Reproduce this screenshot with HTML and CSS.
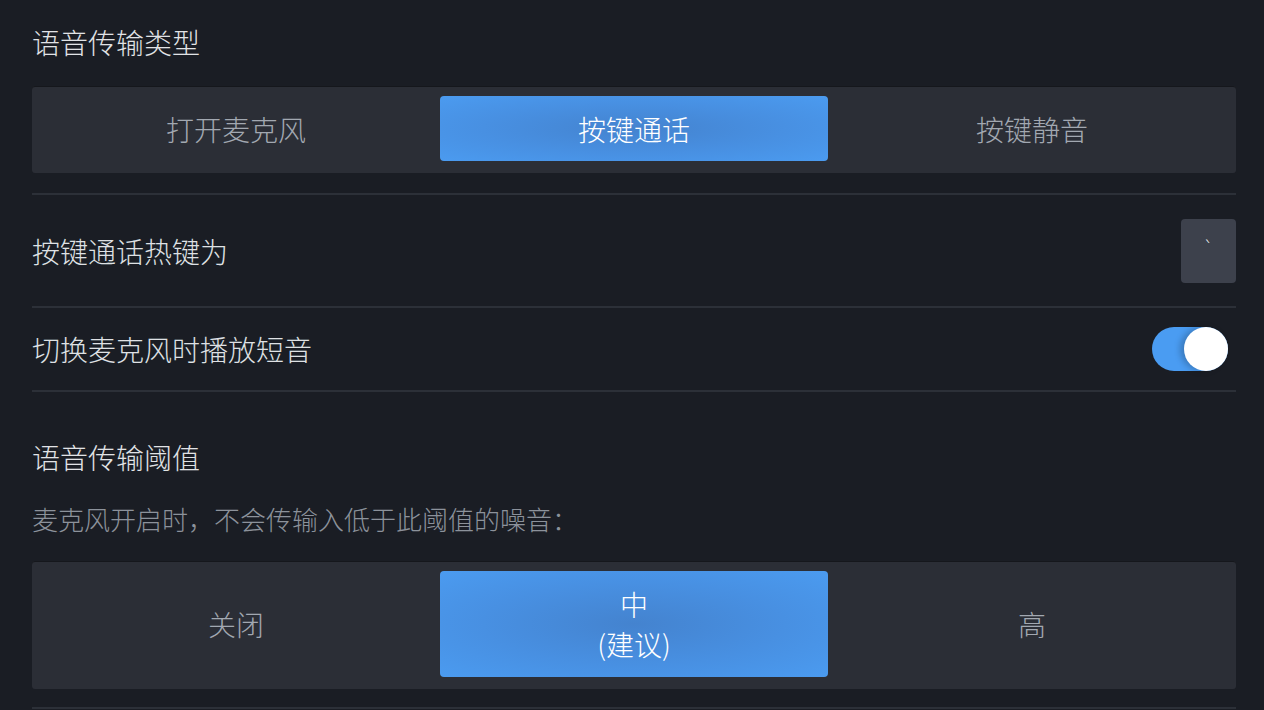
FILE: index.html
```html
<!DOCTYPE html>
<html lang="zh-CN">
<head>
<meta charset="utf-8">
<link rel="stylesheet" href="styles.css">
</head>
<body>
<div class="page">
  <div class="section-title first">语音传输类型</div>
  <div class="segmented seg-short">
    <div class="seg-option">打开麦克风</div>
    <div class="seg-option active">按键通话</div>
    <div class="seg-option">按键静音</div>
  </div>
  <div class="divider spaced"></div>
  <div class="row row-key">
    <div class="row-label">按键通话热键为</div>
    <div class="keybox">`</div>
  </div>
  <div class="divider"></div>
  <div class="row row-toggle">
    <div class="row-label">切换麦克风时播放短音</div>
    <div class="toggle"><div class="knob"></div></div>
  </div>
  <div class="divider"></div>
  <div class="section-title second">语音传输阈值</div>
  <div class="description">麦克风开启时，不会传输入低于此阈值的噪音：</div>
  <div class="segmented seg-tall">
    <div class="seg-option">关闭</div>
    <div class="seg-option active">中<br>(建议)</div>
    <div class="seg-option">高</div>
  </div>
  <div class="divider spaced-bottom"></div>
</div>
</body>
</html>
```

FILE: styles.css
```css
html, body {
  margin: 0;
  padding: 0;
  background: #1a1d24;
  height: 100%;
  overflow: hidden;
}

.page {
  padding: 0 28px 0 32px;
  font-family: "Noto Sans CJK SC", "Noto Sans", sans-serif;
  font-weight: 300;
  color: #dcdfe2;
}

.section-title {
  font-size: 28px;
  line-height: 36px;
  color: #e1e3e6;
}

.section-title.first {
  padding-top: 24px;
  margin-bottom: 26px;
}

.section-title.second {
  padding-top: 47px;
  margin-bottom: 26px;
}

.description {
  font-size: 26px;
  line-height: 36px;
  color: #8c929b;
  margin-bottom: 24px;
}

.segmented {
  display: flex;
  background: #2b2e36;
  border-radius: 3px;
  padding: 10px 5px 12px;
  box-shadow: inset 0 1px 0 #15171c;
}

.seg-short { height: 65px; }
.seg-tall { height: 106px; }

.seg-option {
  flex: 1;
  margin: 0 5px;
  display: flex;
  align-items: center;
  justify-content: center;
  text-align: center;
  font-size: 28px;
  line-height: 40px;
  color: #a2a8b1;
  border-radius: 4px;
}

.seg-option.active {
  color: #ffffff;
  background: radial-gradient(ellipse at center, #4483cf 0%, #4890e2 55%, #4b9bf0 100%);
}

.divider {
  height: 2px;
  background: #2c3038;
}

.divider.spaced { margin-top: 20px; }
.divider.spaced-bottom { margin-top: 18px; }

.row {
  display: flex;
  align-items: center;
  justify-content: space-between;
}

.row-key { padding: 24px 0 23px; }
.row-toggle { padding: 19px 0 19px; }

.row-label {
  font-size: 28px;
  line-height: 36px;
  color: #dfe1e4;
}

.keybox {
  width: 55px;
  height: 64px;
  background: #3d414c;
  border-radius: 4px;
  color: #ffffff;
  font-family: "DejaVu Sans", sans-serif;
  font-size: 18px;
  line-height: 58px;
  text-align: center;
}

.toggle {
  width: 76px;
  height: 44px;
  margin-right: 8px;
  border-radius: 22px;
  background: #4a9cf2;
  display: flex;
  justify-content: flex-end;
}

.knob {
  width: 44px;
  height: 44px;
  border-radius: 50%;
  background: #ffffff;
  box-shadow: -4px 0 6px rgba(0, 0, 0, 0.22);
}
```
